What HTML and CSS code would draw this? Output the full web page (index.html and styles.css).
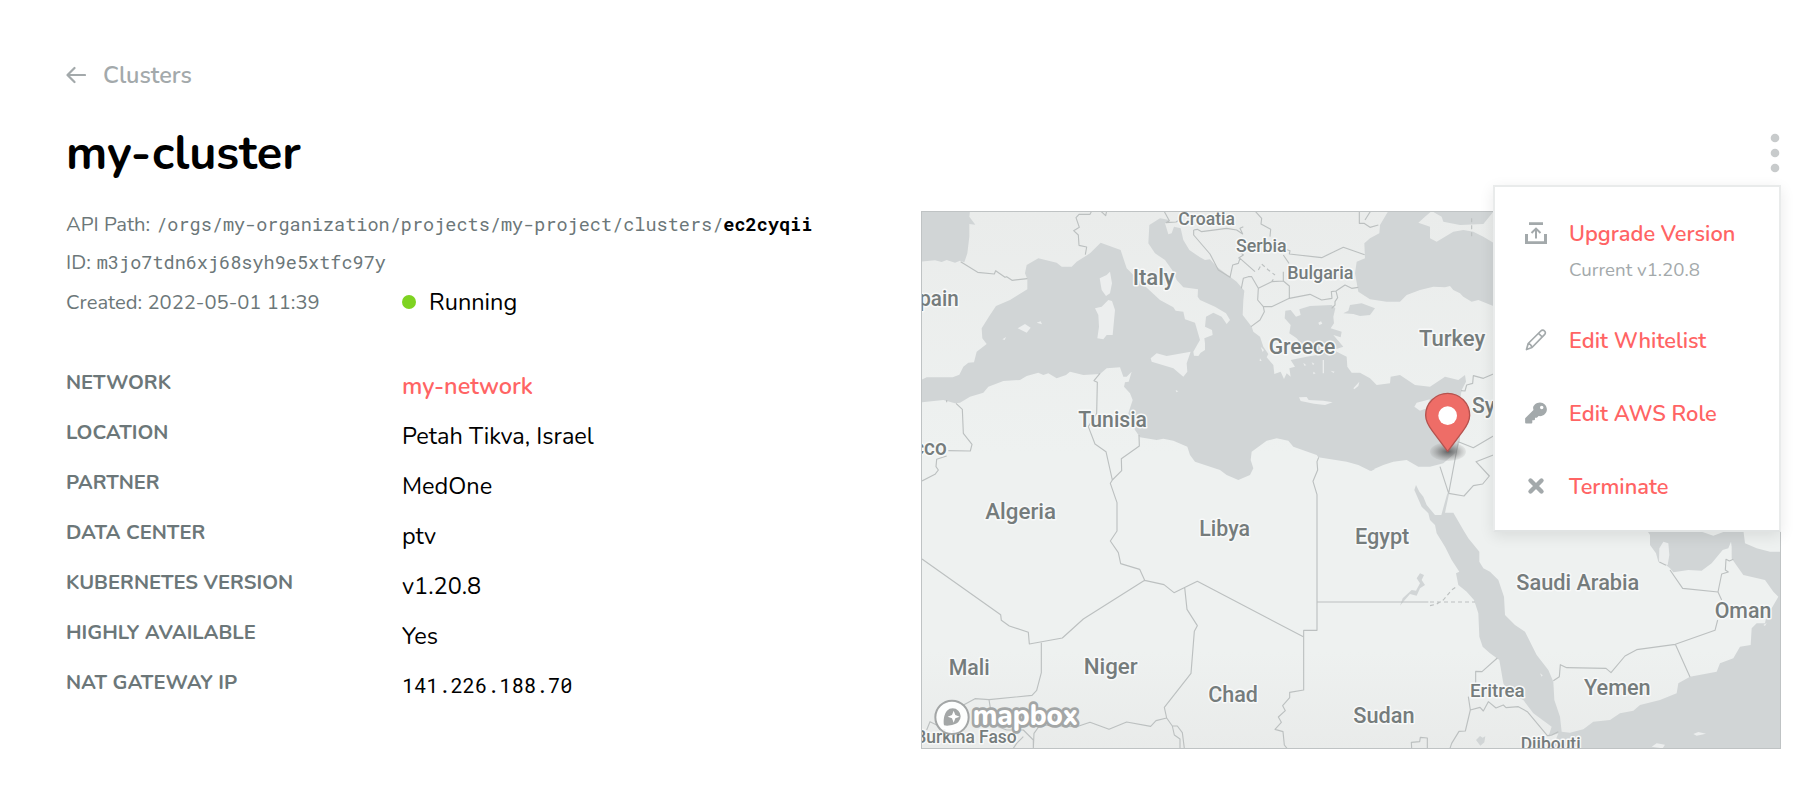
FILE: index.html
```html
<!DOCTYPE html>
<html lang="en">
<head>
<meta charset="utf-8">
<title>my-cluster</title>
<link rel="stylesheet" href="styles.css">
</head>
<body>
<main class="page">
  <a class="back">
    <svg class="back-icon" width="20" height="18" viewBox="0 0 20 18"><path d="M19 9H2M8.500 2L1.500 9l7 7"/></svg>
    <span class="back-text">Clusters</span>
  </a>
  <header class="heading">
    <h1 class="title">my-cluster</h1>
    <div class="actions">
      <svg class="dots" width="12" height="44" viewBox="0 0 12 44"><circle cx="6" cy="7" r="4.300"/><circle cx="6" cy="22" r="4.300"/><circle cx="6" cy="37" r="4.300"/></svg>
      <nav class="menu">
        <div class="item item-tall">
          <svg class="icon" width="24" height="24" viewBox="0 0 24 24"><path class="solid" d="M5 1.300h14v2.700H5zM1 13h3v7.300h16V13h3v10H1z"/><path class="line" d="M12 17.500V8.500M7.500 12L12 7.600l4.500 4.400"/></svg>
          <div class="item-body"><span class="item-text">Upgrade Version</span><span class="item-note">Current v1.20.8</span></div>
        </div>
        <div class="item">
          <svg class="icon" width="24" height="24" viewBox="0 0 24 24"><path class="thin" d="M2.500 21.500l1.700-6L16.800 3c1.300-1.300 2.700-1 3.700 0s1.300 2.400 0 3.700L8 19.500zM4.200 15.500c1.800.3 3.200 1.700 3.800 4M14.500 5.300L18.300 9"/></svg>
          <span class="item-text">Edit Whitelist</span>
        </div>
        <div class="item">
          <svg class="icon" width="24" height="24" viewBox="0 0 512 512"><path class="solid" d="M488 176.500C488 258 422 323 341 323c-11 0-20-1-30-3l-25 28a22 22 0 0 1-17 8h-35v35a22 22 0 0 1-22 22h-35v45a22 22 0 0 1-22 22H46a22 22 0 0 1-22-22v-79c0-6 2-12 6-16l172-172a150 150 0 0 1-8-45C194 96 259 30 341 30c81 0 147 65 147 146.500zM341 140a37 37 0 1 0 74 0 37 37 0 0 0-74 0z"/></svg>
          <span class="item-text">Edit AWS Role</span>
        </div>
        <div class="item">
          <svg class="icon" width="24" height="24" viewBox="0 0 24 24"><path class="cross" d="M6.500 6.500l11 11M17.500 6.500l-11 11"/></svg>
          <span class="item-text">Terminate</span>
        </div>
      </nav>
    </div>
  </header>

  <div class="content">
    <section class="details">
      <div class="meta"><span>API Path:</span> <code class="mono">/orgs/my-organization/projects/my-project/clusters/<b>ec2cyqii</b></code></div>
      <div class="meta"><span>ID:</span> <code class="mono">m3jo7tdn6xj68syh9e5xtfc97y</code></div>
      <div class="meta meta-split"><span>Created: 2022-05-01 11:39</span><span class="status"><i class="status-dot"></i>Running</span></div>
      <dl class="facts">
        <dt>NETWORK</dt><dd class="link">my-network</dd>
        <dt>LOCATION</dt><dd>Petah Tikva, Israel</dd>
        <dt>PARTNER</dt><dd>MedOne</dd>
        <dt>DATA CENTER</dt><dd>ptv</dd>
        <dt>KUBERNETES VERSION</dt><dd>v1.20.8</dd>
        <dt>HIGHLY AVAILABLE</dt><dd>Yes</dd>
        <dt>NAT GATEWAY IP</dt><dd class="ip">141.226.188.70</dd>
      </dl>
    </section>

    <svg class="map" viewBox="36 36 2574 1608" preserveAspectRatio="none">
      <defs>
        <radialGradient id="shade"><stop offset="0" stop-color="#333" stop-opacity=".7"/><stop offset=".5" stop-color="#555" stop-opacity=".45"/><stop offset="1" stop-color="#777" stop-opacity="0.100"/></radialGradient>
        <linearGradient id="ground" x1="0" y1="0" x2="0" y2="1"><stop offset="0" stop-color="#eaeceb"/><stop offset=".45" stop-color="#eef1f0"/><stop offset=".82" stop-color="#eef1f0"/><stop offset="1" stop-color="#e9ebea"/></linearGradient>
      </defs>
      <rect x="33" y="33" width="2580" height="1614" fill="url(#ground)"/>
      <g class="water">
        <path d="M33 33H180L178 50 196 74 178 72 178 110 172 160 163 187 150 182 135 188 110 180 95 186 75 181 33 185z"/>
        <path d="M33 540L50 532 128 532 148 524 160 500 175 488 192 487 200 455 230 432 217 415 215 385 240 345 258 318 300 300 352 268 352 238 345 220 350 195 385 175 440 188 455 200 485 200 500 185 540 160 572 128 605 140 632 150 640 175 650 205 680 235 720 272 750 300 790 322 797 332 820 335 825 358 855 368 870 420 863 432 850 455 852 467 865 468 872 458 885 450 885 430 883 415 908 405 906 390 885 380 888 350 910 338 935 350 950 372 960 360 948 340 915 320 870 300 863 290 864 268 820 262 800 240 790 215 765 180 735 160 715 130 718 75 750 55 778 60 765 70 775 103 785 100 792 80 812 85 820 120 838 150 870 172 885 180 900 178 920 200 962 232 980 245 1003 272 1000 300 998 345 1025 380 1030 395 1050 410 1060 440 1075 462 1070 472 1090 495 1093 522 1112 515 1122 537 1130 520 1142 530 1138 505 1155 500 1142 480 1190 470 1220 465 1180 440 1160 415 1138 400 1142 375 1124 355 1126 332 1142 330 1158 350 1172 345 1168 328 1200 318 1265 315 1276 325 1270 350 1272 370 1262 385 1295 395 1292 412 1270 405 1300 440 1270 450 1310 470 1312 500 1325 518 1350 518 1380 535 1400 555 1440 550 1442 530 1470 525 1515 555 1560 560 1605 530 1645 540 1665 525 1668 545 1655 570 1650 600 1650 720 1640 755 1600 790 1560 800 1525 800 1490 780 1450 785 1420 795 1380 812 1345 795 1310 785 1225 772 1220 765 1150 740 1135 722 1100 715 1070 722 1025 755 1022 780 1030 805 1020 825 985 840 950 825 930 810 855 785 840 765 832 740 790 722 760 716 740 720 690 712 675 690 655 640 668 600 660 580 642 560 645 547 656 545 665 515 650 530 640 530 630 502 590 505 570 522 520 525 480 515 468 525 440 535 415 520 400 525 385 518 350 528 330 540 280 543 235 560 220 578 180 590 150 608 135 610 100 600 33 607z"/>
        <path d="M1345 275L1335 220 1340 185 1365 175 1363 130 1380 115 1408 100 1410 75 1435 33 1565 33 1545 50 1525 68 1560 80 1560 115 1580 125 1630 95 1660 90 1690 95 1720 110 1750 128V318L1705 300 1685 305 1660 290 1650 280 1630 270 1620 258 1605 262 1570 260 1530 270 1490 285 1470 305 1430 305 1380 298z"/>
        <path d="M1565 33L1595 50 1600 65 1650 75 1720 72 1750 35V33z"/>
        <path d="M1300 340L1315 332 1320 315 1355 310 1395 325 1380 345 1350 348 1330 342z"/>
        <path d="M1518 855L1528 875 1540 890 1550 915 1575 945 1594 945 1612 880 1617 882 1605 938 1630 938 1660 990 1675 1015 1708 1055 1708 1085 1720 1105 1740 1115 1765 1140 1782 1190 1785 1245 1815 1275 1845 1295 1880 1365 1915 1410 1930 1445 1933 1500 1950 1550 1955 1595 1980 1598 2020 1588 2050 1565 2100 1560 2130 1540 2170 1532 2190 1515 2250 1500 2300 1480 2305 1450 2340 1430 2420 1415 2430 1390 2470 1375 2490 1340 2522 1335 2525 1285 2540 1270 2565 1270 2570 1245 2585 1225 2605 1190 2590 1175 2565 1140 2500 1125 2475 1090 2465 1075 2465 1040 2463 1025 2455 1045 2438 1050 2405 1090 2375 1112 2335 1110 2290 1117 2280 1105 2265 1093 2245 1085 2238 1060 2220 1035 2220 1005 2210 990H2360L2410 1007 2430 1000 2470 985 2500 990 2505 1030 2540 1045 2580 1055H2615V1650H1920L1935 1625 1945 1600 1915 1610 1925 1580 1870 1540 1840 1500 1795 1480 1780 1450 1768 1380 1740 1360 1718 1340 1708 1310 1705 1240 1692 1200 1670 1175 1645 1155 1638 1120 1648 1115 1625 1080 1605 1040 1580 1000 1575 975 1560 960 1555 940 1535 920 1513 870z"/>
        <path d="M1470 1217L1478 1195 1505 1170 1518 1172 1530 1150 1520 1135 1530 1120 1542 1125 1535 1140 1545 1155 1530 1165 1520 1187 1500 1182 1480 1205z"/>
        <path d="M1372 806h24l-12 7zM1698 1620l12-12 8 5 8-4-3 18-12 10z"/>
      </g>
      <g class="isle">
        <path d="M600 215L606 250 600 280 588 288 575 270 569 235 590 225zM555 325L575 320 595 300 606 303 615 330 608 405 590 405 580 418 562 415 567 380 565 345zM722 475L740 460 770 468 842 455 830 490 832 515 820 530 790 505 725 485zM323 385L345 372 362 383 350 398zM380 368L392 364 396 373zM277 418L288 411 284 420zM797 570l8 4-6 3z"/>
        <path d="M1167 592L1190 591 1196 600 1240 602 1268 607 1245 615 1212 611 1172 603zM1513 620L1520 608 1560 598 1550 625 1530 632zM1330 565L1348 545 1345 558 1333 568zM1225 368l8-4 4 7-9 4zM1238 480h4v40h-4zM1205 487l8 4-4 5zM1255 430l14 3-6 8zM1262 512l12 3-4 4zM1180 488l9 8-6 1zM1210 515l7 5-7 3zM1052 440l10 10-4 6zM1050 475l5 8-6 0z"/>
        <path d="M2247 1085L2248 1045 2260 1025 2275 1030 2278 1065 2273 1095 2262 1093zM2225 1640L2240 1630 2265 1634 2258 1645zM2350 1602L2365 1596 2388 1601 2360 1607zM1890 1420l8 6-3 4zM2560 1275l10-6-5 9z"/>
      </g>
      <g class="borders">
        <path d="M152 185L203 217 253 222 257 212 285 232 290 230 306 241 352 236M526 164L530 141 507 136 505 105 491 92 508 82 498 53 507 43 540 43 545 33M572 33L587 47 590 33M762 33L778 62 768 68 798 66 808 60M851 90L862 88 875 95 950 85 980 90 998 102 990 85 1000 80M851 90V105L900 162 925 210 960 232 968 195 985 190 990 175 1035 215M1035 33L1055 55 1053 72 1082 88 1080 110M1118 145L1140 152 1138 162 1235 173 1300 142 1364 164M1120 165L1137 190M985 175L1000 165 985 150M994 265L1000 235 1015 230 1025 230 1045 265 1085 245 1120 243 1138 258 1138 295 1085 320 1060 320 1043 300 1045 265M1085 245L1090 238M1120 243L1120 215M1060 320L1063 335 1050 360 1023 380M1138 295L1200 283 1235 300 1266 295 1264 275 1278 273 1283 293 1275 305 1275 315 1265 325M1278 273L1305 255 1325 265 1345 262M1348 33V70L1362 70 1380 82 1405 75M1365 60L1382 33M1750 522L1720 535 1690 527 1688 550 1670 555 1665 573 1653 572"/>
        <path d="M570 520L552 542 562 547 560 640 535 680 555 732 588 755 607 840 635 812 634 776 688 738 687 705M607 840L601 850 621 908V993L601 1023 625 1058 632 1091 689 1108 704 1141 762 1154 792 1178 862 1144 1180 1310M704 1141L520 1257 457 1314 358 1332 355 1297 298 1278 274 1261 272 1244 36 1077M394 1328V1418L380 1471 366 1486 237 1499 195 1496 155 1518M237 1499L242 1530 265 1580 290 1590 340 1590 370 1620 370 1645M370 1645L372 1600 390 1575 500 1580 540 1567 597 1588 650 1566 722 1579 738 1562 770 1554 763 1522 843 1420 853 1294 862 1277 831 1228 824 1162M770 1554L787 1578 793 1605 810 1617V1645M787 1578H802L817 1598 823 1645M310 1645L320 1630 340 1610M50 1590L60 1565 80 1575 90 1590"/>
        <path d="M110 600V607M138 610L157 628 160 700 186 733 181 753 115 752M110 768L80 778 78 800 85 810 75 823 36 843M1226 772L1221 785 1223 810 1209 844 1221 884V1291H1181V1470L1139 1477V1493L1118 1517 1126 1532 1105 1551 1114 1567 1095 1588 1119 1595 1123 1635 1131 1645M1221 1206H1555M1505 1645L1504 1627 1529 1625 1531 1612 1552 1614V1645M1620 1645L1625 1630 1647 1594 1666 1593 1681 1530 1675 1490M1762 1374L1716 1415 1697 1414V1450M1681 1530L1710 1522 1720 1533 1735 1505 1758 1524 1780 1515 1788 1523 1825 1520 1852 1535 1912 1607 1925 1605 1945 1595"/>
        <path d="M1590 800L1616 880 1645 725 1690 743 1750 708M1616 880L1662 888 1690 857 1718 852 1738 828 1698 785 1750 765M1930 1442L1948 1430 1951 1394 1970 1403 2088 1405 2103 1418 2145 1368 2180 1349 2296 1333 2415 1291 2423 1260M2296 1333L2340 1431M2248 1086L2268 1096M2280 1110L2318 1165 2424 1176 2435 1200M2424 1176L2435 1122 2455 1116 2446 1110 2448 1078 2458 1083 2470 1078"/>
        <path class="dashed" d="M1560 1217L1580 1212 1600 1200 1625 1170 1640 1160M1560 1206H1695M1685 55V110M1045 210L1055 192 1075 210 1095 225"/>
      </g>
      <g class="labels">
        <text x="805" y="76" textLength="170" lengthAdjust="spacingAndGlyphs" class="small">Croatia</text>
        <text x="978" y="156" textLength="152" lengthAdjust="spacingAndGlyphs" class="small">Serbia</text>
        <text x="1132" y="237" textLength="198" lengthAdjust="spacingAndGlyphs" class="small">Bulgaria</text>
        <text x="1076" y="461" textLength="200" lengthAdjust="spacingAndGlyphs">Greece</text>
        <text x="1527" y="437" textLength="199" lengthAdjust="spacingAndGlyphs">Turkey</text>
        <text x="1686" y="638" textLength="142" lengthAdjust="spacingAndGlyphs">Syria</text>
        <text x="668" y="256" textLength="126" lengthAdjust="spacingAndGlyphs">Italy</text>
        <text x="-10" y="319" textLength="156" lengthAdjust="spacingAndGlyphs">Spain</text>
        <text x="505" y="682" textLength="206" lengthAdjust="spacingAndGlyphs">Tunisia</text>
        <text x="-136" y="766" textLength="246" lengthAdjust="spacingAndGlyphs">Morocco</text>
        <text x="226" y="958" textLength="212" lengthAdjust="spacingAndGlyphs">Algeria</text>
        <text x="868" y="1008" textLength="152" lengthAdjust="spacingAndGlyphs">Libya</text>
        <text x="1335" y="1032" textLength="163" lengthAdjust="spacingAndGlyphs">Egypt</text>
        <text x="521" y="1421" textLength="162" lengthAdjust="spacingAndGlyphs">Niger</text>
        <text x="116" y="1424" textLength="123" lengthAdjust="spacingAndGlyphs">Mali</text>
        <text x="895" y="1506" textLength="149" lengthAdjust="spacingAndGlyphs">Chad</text>
        <text x="1330" y="1570" textLength="184" lengthAdjust="spacingAndGlyphs">Sudan</text>
        <text x="1680" y="1490" textLength="164" lengthAdjust="spacingAndGlyphs" class="small">Eritrea</text>
        <text x="1819" y="1169" textLength="369" lengthAdjust="spacingAndGlyphs">Saudi Arabia</text>
        <text x="2414" y="1254" textLength="170" lengthAdjust="spacingAndGlyphs">Oman</text>
        <text x="2022" y="1484" textLength="200" lengthAdjust="spacingAndGlyphs">Yemen</text>
        <text x="1832" y="1650" textLength="180" lengthAdjust="spacingAndGlyphs" class="small">Djibouti</text>
        <text x="16" y="1630" textLength="304" lengthAdjust="spacingAndGlyphs" class="small">Burkina Faso</text>
      </g>
      <g class="brand">
        <circle cx="126" cy="1552" r="50" fill="#fff" fill-opacity=".9" stroke="#a3a6a6" stroke-width="6"/>
        <path d="M102 1576C99 1560 103 1540 111 1532A24 24 0 1 1 145 1566C137 1574 117 1579 102 1576z" fill="#a3a6a6"/>
        <path d="M131 1532l5 13 13 5-13 5-5 13-5-13-13-5 13-5z" fill="#fff"/>
        <text x="188" y="1576" textLength="316" lengthAdjust="spacingAndGlyphs">mapbox</text>
      </g>
      <ellipse cx="1614" cy="755" rx="54" ry="28" fill="url(#shade)"/>
      <path class="pin" d="M1613 754L1568 694C1554 676 1547 662 1547 646a66 66 0 0 1 132 0C1679 662 1672 676 1658 694z"/>
      <circle cx="1613" cy="647" r="28" fill="#fff"/>
    </svg>
  </div>
</main>
</body>
</html>
```
FILE: styles.css
```css
* { box-sizing: border-box; }
body {
  margin: 0;
  background: #fff;
  color: #000;
  font-family: Nunito, Lato, "Noto Sans", sans-serif;
}
.page { padding: 55px 39px 0 66px; }

.back { display: flex; align-items: center; gap: 17px; height: 40px; color: #a3a9ab; }
.back-icon { fill: none; stroke: currentColor; stroke-width: 2.2; stroke-linecap: round; stroke-linejoin: round; }
.back-text { font-size: 23.5px; font-weight: 600; line-height: 40px; }

.heading { display: flex; justify-content: space-between; align-items: center; height: 57px; margin-top: 29px; }
.title { margin: 0; padding-top: 2px; font-size: 47px; line-height: 57px; font-weight: 700; }

.actions { position: relative; display: flex; }
.dots { fill: #c8cbcc; }
.menu {
  position: absolute;
  top: 54px;
  right: 0;
  z-index: 2;
  width: 288px;
  height: 347px;
  padding: 25px 0 0 29px;
  background: #fff;
  border: 2px solid #e9ebeb;
  border-bottom-color: #e0e3e3;
  box-shadow: 0 4px 14px rgba(0, 0, 0, .09);
}
.item { display: flex; gap: 21px; height: 73px; }
.item-tall { height: 107px; }
.icon { flex: none; margin-top: 9px; }
.icon .solid { fill: #a3a9ab; fill-rule: evenodd; }
.icon .line { fill: none; stroke: #a3a9ab; stroke-width: 2; }
.icon .thin { fill: none; stroke: #a3a9ab; stroke-width: 1.7; stroke-linejoin: round; }
.icon .cross { stroke: #a3a9ab; stroke-width: 4.4; stroke-linecap: round; }
.item-body { display: flex; flex-direction: column; }
.item-text { font-size: 21.8px; font-weight: 600; line-height: 44px; color: #ff6464; white-space: nowrap; }
.item-note { font-size: 18.7px; line-height: 29px; color: #a3a9ab; }

.content { display: grid; grid-template-columns: 855px 860px; padding-top: 24px; }
.meta { display: flex; align-items: baseline; gap: 6px; height: 38px; line-height: 39px; font-size: 20.2px; color: #6c7779; white-space: nowrap; }
.meta-split { display: grid; grid-template-columns: 336px 1fr; gap: 0; line-height: 40px; }
.mono { font-family: "Roboto Mono", "Liberation Mono", monospace; font-size: 18.55px; line-height: 38px; }
.mono b { color: #000; }
.status { display: flex; align-items: center; gap: 13px; padding-top: 1px; font-size: 23.5px; color: #000; }
.status-dot { width: 14px; height: 14px; border-radius: 50%; background: #7ed321; }

.facts { display: grid; grid-template-columns: 336px 1fr; grid-auto-rows: 50px; margin: 39px 0 0; line-height: 50px; }
.facts dt { font-size: 20.2px; font-weight: 700; color: #6c7779; }
.facts dd { margin: 3px 0 0; font-size: 23.5px; }
.facts .link { color: #ff6464; font-weight: 600; }
.facts .ip { margin-top: 2px; font-family: "Roboto Mono", "Liberation Mono", monospace; font-size: 20.3px; }

.map { display: block; width: 860px; height: 538px; margin-top: 6px; border: 1px solid #bfc3c4; overflow: hidden; }
.water { fill: #d1d5d6; }
.isle { fill: #eceeee; }
.borders { fill: none; stroke: #bcc0c0; stroke-width: 3.4; stroke-linejoin: round; }
.dashed { stroke-dasharray: 12 9; }
.labels { font-family: Roboto, sans-serif; font-weight: 500; font-size: 65px; fill: #757c7c; stroke: #f8f9f9; stroke-width: 9; stroke-linejoin: round; paint-order: stroke; }
.labels .small { font-size: 53px; }
.brand text { font-family: Nunito, sans-serif; font-weight: 800; font-size: 90px; fill: #fff; stroke: #a3a6a6; stroke-width: 17; stroke-linejoin: round; paint-order: stroke; }
.pin { fill: #ee6d67; stroke: #b5524e; stroke-width: 4; stroke-linejoin: round; }
```
